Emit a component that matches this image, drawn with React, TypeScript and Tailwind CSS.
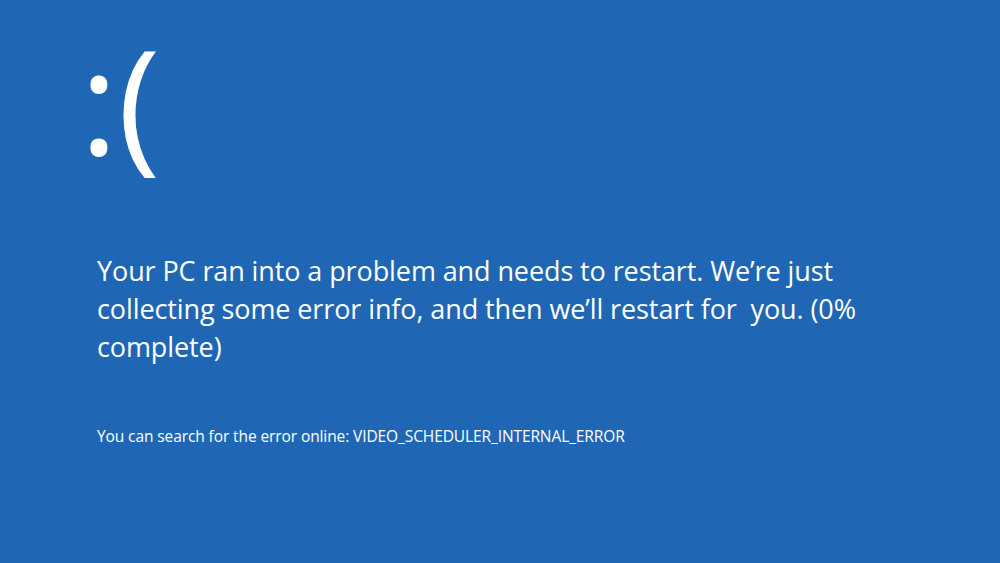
export default function App() {
  return (
    <div
      className="flex h-[563px] w-[1000px] flex-col overflow-hidden bg-[#1f67b5] pl-[88px] text-white"
      style={{ fontFamily: '"Open Sans", "Noto Sans", sans-serif' }}
    >
      {/* Sad face */}
      <div className="-ml-[8px] mt-[14px] mb-[16px] h-[170px] text-[144px] leading-[170px]">:(</div>

      {/* Main message */}
      <p className="ml-[9px] mt-[52px] text-[27px] leading-[38px] tracking-[-0.1px]">
        Your PC ran into a problem and needs to restart. We’re just
        <br />
        collecting some error info, and then we’ll restart for&nbsp; you. (0%
        <br />
        complete)
      </p>

      {/* Stop code */}
      <p className="ml-[9px] mt-[60px] text-[15.5px] leading-[20px] tracking-[-0.1px]">
        You can search for the error online: VIDEO_SCHEDULER_INTERNAL_ERROR
      </p>
    </div>
  );
}
